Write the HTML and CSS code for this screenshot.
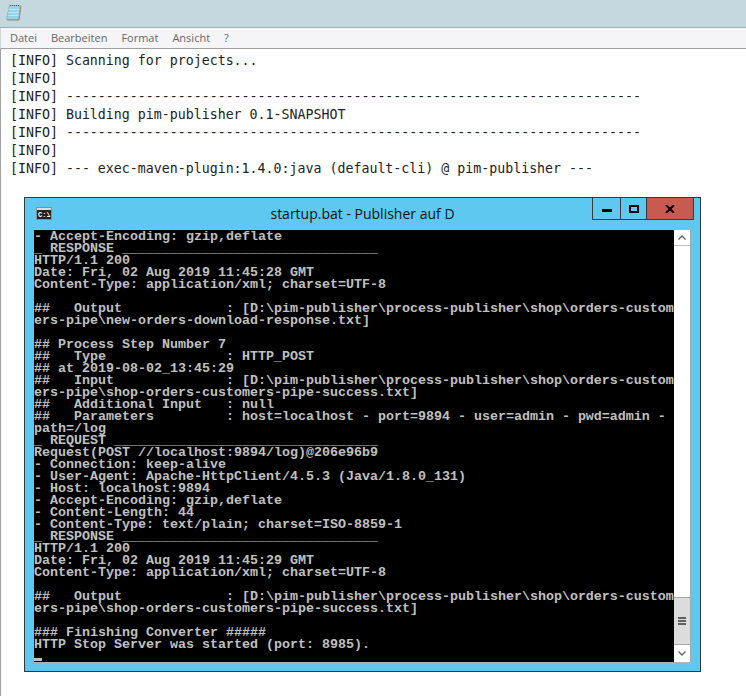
FILE: index.html
```html
<!DOCTYPE html>
<html lang="de">
<head>
<meta charset="utf-8">
<title>startup.bat</title>
<link rel="stylesheet" href="styles.css">
</head>
<body>
<header class="titlebar">
  <svg class="note-icon" width="17" height="17" viewBox="0 0 17 17">
    <path d="M4.5 1.5h11l-2 14h-12z" fill="#92d4ec" stroke="#8fb4c4"/>
    <path d="M3.5 5.5h11M3 8.5h11M2.6 11.5h11" stroke="#bfe6f4"/>
    <path d="M16 2l-2 14H2" fill="none" stroke="#9a8a5c"/>
    <path d="M5 1.5h10" stroke="#555" stroke-dasharray="1 1"/>
  </svg>
</header>
<nav class="menubar">
  <span>Datei</span><span>Bearbeiten</span><span>Format</span><span>Ansicht</span><span>?</span>
</nav>
<main class="editor">
<pre class="log">[INFO] Scanning for projects...
[INFO]
[INFO] ------------------------------------------------------------------------
[INFO] Building pim-publisher 0.1-SNAPSHOT
[INFO] ------------------------------------------------------------------------
[INFO]
[INFO] --- exec-maven-plugin:1.4.0:java (default-cli) @ pim-publisher ---</pre>
  <section class="console-window">
    <div class="console-title">
      <svg class="cmd-icon" width="16" height="13" viewBox="0 0 16 13">
        <rect x="0.5" y="0.5" width="15" height="12" fill="#222" stroke="#8c8c8c"/>
        <rect x="1" y="1" width="14" height="2" fill="#ddd"/>
        <text x="2" y="10" class="cmd-text">C:\</text>
        <rect x="11" y="9" width="3" height="1" fill="#fff"/>
      </svg>
      <span class="console-name">startup.bat - Publisher auf D</span>
      <div class="win-buttons">
        <div class="win-btn btn-min"><svg width="10" height="3" viewBox="0 0 10 3"><rect width="10" height="3" fill="#000"/></svg></div>
        <div class="win-btn btn-max"><svg width="10" height="8" viewBox="0 0 10 8"><rect x="1" y="1" width="8" height="6" fill="none" stroke="#000" stroke-width="2"/></svg></div>
        <div class="win-btn btn-close"><svg width="10" height="8" viewBox="0 0 10 8"><path d="M1 0l8 8M9 0l-8 8" stroke="#000" stroke-width="2"/></svg></div>
      </div>
    </div>
    <div class="console-body">
      <div class="terminal">
<pre class="terminal-text">- Accept-Encoding: gzip,deflate
_ RESPONSE ________________________________
HTTP/1.1 200
Date: Fri, 02 Aug 2019 11:45:28 GMT
Content-Type: application/xml; charset=UTF-8

##   Output             : [D:\pim-publisher\process-publisher\shop\orders-custom
ers-pipe\new-orders-download-response.txt]

## Process Step Number 7
##   Type               : HTTP_POST
## at 2019-08-02_13:45:29
##   Input              : [D:\pim-publisher\process-publisher\shop\orders-custom
ers-pipe\shop-orders-customers-pipe-success.txt]
##   Additional Input   : null
##   Parameters         : host=localhost - port=9894 - user=admin - pwd=admin -
path=/log
_ REQUEST _________________________________
Request(POST //localhost:9894/log)@206e96b9
- Connection: keep-alive
- User-Agent: Apache-HttpClient/4.5.3 (Java/1.8.0_131)
- Host: localhost:9894
- Accept-Encoding: gzip,deflate
- Content-Length: 44
- Content-Type: text/plain; charset=ISO-8859-1
_ RESPONSE ________________________________
HTTP/1.1 200
Date: Fri, 02 Aug 2019 11:45:29 GMT
Content-Type: application/xml; charset=UTF-8

##   Output             : [D:\pim-publisher\process-publisher\shop\orders-custom
ers-pipe\shop-orders-customers-pipe-success.txt]

### Finishing Converter #####
HTTP Stop Server was started (port: 8985).</pre>
        <span class="cursor"></span>
      </div>
      <div class="scrollbar">
        <div class="sb-btn"><svg width="8" height="5" viewBox="0 0 8 5"><path d="M0.5 4.5L4 1l3.5 3.5" fill="none" stroke="#606060" stroke-width="1.3"/></svg></div>
        <div class="sb-track"></div>
        <div class="sb-thumb"><svg width="8" height="8" viewBox="0 0 8 8"><path d="M0 1h8M0 4h8M0 7h8" stroke="#606060" stroke-width="2"/></svg></div>
        <div class="sb-btn sb-down"><svg width="8" height="5" viewBox="0 0 8 5"><path d="M0.5 0.5L4 4l3.5-3.5" fill="none" stroke="#606060" stroke-width="1.3"/></svg></div>
      </div>
    </div>
  </section>
</main>
</body>
</html>
```
FILE: styles.css
```css
* { box-sizing: border-box; }
html, body { margin: 0; height: 696px; overflow: hidden; background: #fff; }
body { display: flex; flex-direction: column; }

.titlebar {
  height: 28px;
  flex: none;
  background: #c5d8e0;
  border-bottom: 1px solid #9fb0b8;
  padding: 4px 0 0 5px;
}
.note-icon { display: block; }

.menubar {
  height: 21px;
  flex: none;
  display: flex;
  align-items: center;
  gap: 14px;
  padding: 0 0 2px 9px;
  background: #f5f5f8;
  border-left: 1px solid #d0d8dc;
  border-bottom: 1px solid #a0a0a0;
  font: 11px/1 "Open Sans", sans-serif;
  color: #666;
}

.editor { flex: 1; padding: 3px 0 0 3px; border-left: 1px solid #a0a0a0; }

.log {
  margin: 0 0 0 6px;
  font: 13.28px/18px "DejaVu Sans Mono", monospace;
  color: #222;
}

.console-window {
  width: 677px;
  height: 475px;
  margin: 19px 0 0 20px;
  background: #5ec8f0;
  border: 1px solid #2d3a40;
  padding: 0 9px 8px 9px;
  display: flex;
  flex-direction: column;
}

.console-title {
  height: 31px;
  flex: none;
  position: relative;
  display: flex;
  justify-content: center;
  padding-top: 7px;
}
.cmd-icon { position: absolute; left: 2px; top: 9px; }
.cmd-text { font: bold 7px "Liberation Mono", monospace; fill: #fff; }
.console-name { font: 14px/18px "Open Sans", sans-serif; color: #111; }

.win-buttons {
  position: absolute;
  right: -3px;
  top: 0;
  height: 22px;
  display: flex;
  border: 1px solid #3a3a3a;
  border-top: 0;
}
.win-btn { display: flex; align-items: center; justify-content: center; }
.btn-min { width: 28px; border-right: 1px solid #3a3a3a; padding-top: 3px; }
.btn-max { width: 26px; border-right: 1px solid #3a3a3a; }
.btn-close { width: 46px; background: #c75b52; }

.console-body {
  flex: 1;
  min-height: 0;
  display: flex;
  border-top: 1px solid #a9b4ba;
  border-bottom: 1px solid #a9b4ba;
  border-right: 1px solid #a9b4ba;
}

.terminal {
  position: relative;
  width: 640px;
  flex: none;
  padding-top: 1px;
  background: #000;
}
.terminal-text {
  margin: 0;
  color: #c0c0c0;
  font: bold 13.33px/12px "Liberation Mono", monospace;
}
.cursor {
  position: absolute;
  left: 0;
  bottom: 1px;
  width: 8px;
  height: 3px;
  background: #c0c0c0;
}

.scrollbar {
  width: 17px;
  flex: none;
  display: flex;
  flex-direction: column;
  background: #fff;
  border-right: 1px solid #a9a9a9;
}
.sb-btn {
  height: 16px;
  flex: none;
  display: flex;
  align-items: center;
  justify-content: center;
  background: #fff;
  border-bottom: 1px solid #bdbdbd;
}
.sb-down { border-bottom: 0; height: 17px; }
.sb-track { flex: 1; }
.sb-thumb {
  height: 48px;
  flex: none;
  display: flex;
  align-items: center;
  justify-content: center;
  background: #dcdcdc;
  border-top: 1px solid #a9a9a9;
  border-bottom: 1px solid #a9a9a9;
}
```
